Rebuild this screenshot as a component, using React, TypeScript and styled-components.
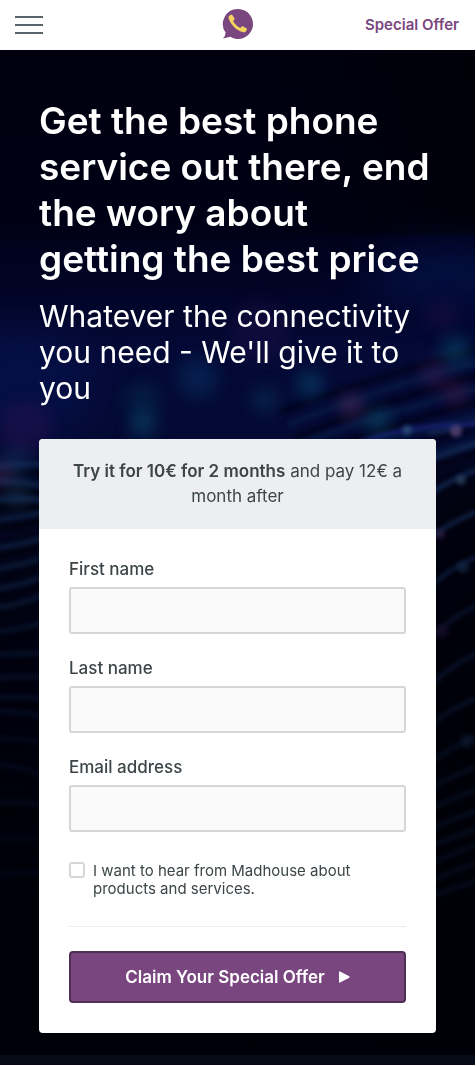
import React from "react";
import styled, { createGlobalStyle } from "styled-components";

const GlobalStyle = createGlobalStyle`
  *, *::before, *::after { box-sizing: border-box; }
  html { background: #fff; }
  body {
    margin: 0;
    padding: 0 1px 1px 0;
    background: #fff;
    color: #3d4548;
    font-family: Inter, "Open Sans", "Liberation Sans", sans-serif;
  }
`;

const Header = styled.header`
  display: grid;
  grid-template-columns: 1fr auto 1fr;
  align-items: center;
  height: 50px;
  padding: 0 16px 0 15px;
  background: #fff;
`;

const MenuButton = styled.button`
  display: flex;
  flex-direction: column;
  gap: 6px;
  justify-self: start;
  width: 28px;
  padding: 0;
  border: 0;
  background: none;
  cursor: pointer;
`;

const MenuBar = styled.span`
  height: 2px;
  background: #57646b;
`;

const LogoLink = styled.a`
  display: flex;
`;

const OfferLink = styled.a`
  justify-self: end;
  color: #7a4680;
  font-size: 15px;
  font-weight: 600;
  line-height: 20px;
  text-decoration: none;
`;

const Hero = styled.main`
  position: relative;
  overflow: hidden;
  padding: 48px 39px 22px;
  background: #000010;
`;

const Backdrop = styled.svg`
  position: absolute;
  inset: 0;
  width: 100%;
  height: 100%;
`;

const Content = styled.div`
  position: relative;
`;

const Title = styled.h1`
  margin: 0 0 16px;
  color: #fff;
  font-size: 37px;
  font-weight: 600;
  line-height: 46px;
`;

const Subtitle = styled.p`
  margin: 0 0 33px;
  color: #fff;
  font-size: 30px;
  font-weight: 400;
  line-height: 36px;
`;

const Card = styled.form`
  overflow: hidden;
  border-radius: 4px;
  background: #fff;
`;

const Banner = styled.p`
  margin: 0;
  padding: 20px 30px;
  background: #eceef0;
  font-size: 17px;
  line-height: 25px;
  text-align: center;
`;

const Strong = styled.strong`
  font-weight: 600;
`;

const Fields = styled.div`
  display: flex;
  flex-direction: column;
  gap: 24px;
  padding: 30px;
`;

const Field = styled.div`
  display: flex;
  flex-direction: column;
  gap: 8px;
`;

const Label = styled.label`
  font-size: 17px;
  font-weight: 500;
  line-height: 20px;
`;

const Input = styled.input`
  width: 100%;
  height: 47px;
  padding: 0 12px;
  border: 2px solid #d4d6d8;
  border-radius: 3px;
  background: #fafafa;
  color: inherit;
  font: inherit;
`;

const Consent = styled.div`
  display: flex;
  align-items: flex-start;
  gap: 8px;
  padding: 6px 0 4px;
`;

const Checkbox = styled.input`
  flex: none;
  appearance: none;
  width: 16px;
  height: 16px;
  margin: 0;
  border: 2px solid #d4d6d8;
  border-radius: 3px;
  background: #fff;

  &:checked { background: #7a4680; }
`;

const ConsentLabel = styled.label`
  max-width: 264px;
  font-size: 15px;
  line-height: 18px;
`;

const Divider = styled.hr`
  width: 100%;
  height: 1px;
  margin: 0;
  border: 0;
  background: #ececee;
`;

const SubmitButton = styled.button`
  display: flex;
  align-items: center;
  justify-content: center;
  gap: 14px;
  height: 52px;
  border: 2px solid #502f57;
  border-radius: 4px;
  background: #7a4680;
  color: #fff;
  font-family: inherit;
  font-size: 17px;
  font-weight: 600;
  cursor: pointer;
`;

const Footer = styled.footer`
  height: 10px;
  background: #060b18;
`;

const fields = [
  { id: "first-name", label: "First name", type: "text" },
  { id: "last-name", label: "Last name", type: "text" },
  { id: "email", label: "Email address", type: "email" },
];

const rightStreaks = [
  [430, 425, 0.8], [457, 447, 0.8], [491, 473, 0.8],
  [535, 515, 0.7], [584, 560, 0.55], [637, 609, 0.4], [684, 657, 0.4],
  [723, 701, 0.35], [760, 740, 0.3], [786, 770, 0.3], [806, 793, 0.3],
  [826, 814, 0.3], [843, 832, 0.3], [861, 848, 0.25], [878, 866, 0.25],
  [893, 884, 0.25],
];

const leftStreaks = [
  [466, 464, 0.7], [482, 488, 0.7], [500, 500, 0.7], [520, 511, 0.6],
  [548, 536, 0.6], [569, 555, 0.5], [589, 574, 0.5], [608, 592, 0.45],
  [632, 620, 0.35], [655, 653, 0.35], [678, 677, 0.3], [698, 699, 0.3],
  [712, 718, 0.25], [739, 745, 0.2], [765, 780, 0.2], [803, 805, 0.2],
  [838, 838, 0.15], [874, 872, 0.15],
];

const waveStreaks = [300, 313, 326, 339, 352, 365, 378, 391, 404];

const glows = [
  { x: 455, y: 301, r: 15, c: "#0c5273", o: 0.5 },
  { x: 310, y: 334, r: 13, c: "#0c4f78", o: 0.55 },
  { x: 198, y: 328, r: 20, c: "#0c3c70", o: 0.4 },
  { x: 142, y: 350, r: 18, c: "#0a4462", o: 0.3 },
  { x: 143, y: 374, r: 13, c: "#0d5575", o: 0.5 },
  { x: 378, y: 371, r: 13, c: "#0f6074", o: 0.45 },
  { x: 265, y: 350, r: 14, c: "#0c4668", o: 0.35 },
  { x: 351, y: 356, r: 11, c: "#54305f", o: 0.65 },
  { x: 455, y: 343, r: 12, c: "#552048", o: 0.45 },
  { x: 434, y: 324, r: 13, c: "#421f55", o: 0.5 },
  { x: 442, y: 265, r: 16, c: "#24104a", o: 0.4 },
  { x: 260, y: 280, r: 30, c: "#27104c", o: 0.35 },
  { x: 25, y: 378, r: 26, c: "#2d1252", o: 0.45 },
  { x: 15, y: 413, r: 16, c: "#113463", o: 0.5 },
  { x: 2, y: 425, r: 11, c: "#4b2b5a", o: 0.6 },
  { x: 18, y: 445, r: 13, c: "#17334e", o: 0.6 },
  { x: 407, y: 380, r: 5, c: "#2a5276", o: 0.8 },
  { x: 456, y: 381, r: 6, c: "#5a4779", o: 0.8 },
  { x: 461, y: 430, r: 5, c: "#35546c", o: 0.6 },
  { x: 440, y: 484, r: 5, c: "#39254f", o: 0.6 },
  { x: 463, y: 517, r: 6, c: "#142846", o: 0.7 },
  { x: 467, y: 691, r: 7, c: "#0a1d34", o: 0.6 },
  { x: 442, y: 581, r: 7, c: "#1c1030", o: 0.6 },
];

const NightSky = () => (
  <Backdrop viewBox="0 0 475 1005" preserveAspectRatio="none" aria-hidden="true">
    <defs>
      <linearGradient id="sky" x1="0" y1="0" x2="0" y2="1">
        <stop offset="0" stopColor="#00000f" />
        <stop offset="0.17" stopColor="#000015" />
        <stop offset="0.24" stopColor="#020427" />
        <stop offset="0.3" stopColor="#040a36" />
        <stop offset="0.38" stopColor="#040a34" />
        <stop offset="0.45" stopColor="#030720" />
        <stop offset="0.58" stopColor="#010211" />
        <stop offset="0.75" stopColor="#00000a" />
        <stop offset="1" stopColor="#000009" />
      </linearGradient>
      <linearGradient id="edge" x1="0" y1="0" x2="1" y2="0">
        <stop offset="0.55" stopColor="#000008" stopOpacity="0" />
        <stop offset="1" stopColor="#000008" stopOpacity="0.9" />
      </linearGradient>
      <filter id="haze" x="-150%" y="-150%" width="400%" height="400%" colorInterpolationFilters="sRGB">
        <feGaussianBlur stdDeviation="8" />
      </filter>
      <filter id="mist" x="-100%" y="-100%" width="300%" height="300%" colorInterpolationFilters="sRGB">
        <feGaussianBlur stdDeviation="20" />
      </filter>
      <filter id="soft" x="-50%" y="-50%" width="200%" height="200%" colorInterpolationFilters="sRGB">
        <feGaussianBlur stdDeviation="2" />
      </filter>
    </defs>
    <rect width="475" height="1005" fill="url(#sky)" />
    <rect width="475" height="185" fill="url(#edge)" />
    <rect x="420" y="420" width="110" height="640" fill="#000008" opacity="0.7" filter="url(#mist)" />
    <ellipse cx="450" cy="225" rx="85" ry="28" fill="#04134a" opacity="0.8" filter="url(#mist)" />
    <ellipse cx="20" cy="335" rx="75" ry="52" fill="#06114a" opacity="0.8" filter="url(#mist)" />
    <g filter="url(#soft)" fill="none">
      {waveStreaks.map((y, i) => (
        <path
          key={y}
          d={`M${280 + (i % 3) * 8} ${y + 62}Q370 ${y + 28} 490 ${y - 4}`}
          stroke={i % 2 ? "#0a2149" : "#00000f"}
          strokeWidth="6"
          opacity="0.55"
        />
      ))}
      {rightStreaks.map(([from, to, opacity]) => (
        <path key={from} d={`M428 ${from - 46}Q455 ${to - 46} 482 ${to - 55}`} stroke="#16305d" strokeWidth="4" opacity={opacity} />
      ))}
      {leftStreaks.map(([from, to, opacity]) => (
        <g key={from} opacity={opacity}>
          <path d={`M-8 ${from - 50}Q20 ${from - 52} 50 ${to - 50}`} stroke="#122c50" strokeWidth="5" />
          <path d={`M-8 ${from - 42}Q20 ${from - 44} 50 ${to - 42}`} stroke="#000008" strokeWidth="5" />
        </g>
      ))}
      <path d="M360 392Q420 372 485 375" stroke="#171f70" strokeWidth="4" />
    </g>
    {glows.map((g) => (
      <circle
        key={`${g.x}-${g.y}`}
        cx={g.x}
        cy={g.y}
        r={g.r}
        fill={g.c}
        opacity={g.o}
        filter={g.r > 8 ? "url(#haze)" : "url(#soft)"}
      />
    ))}
  </Backdrop>
);

const Logo = () => (
  <svg width="32" height="32" viewBox="0 0 32 32" aria-hidden="true">
    <path
      d="M17 0A15 15 0 1 1 9.200 27.800Q5 29 2 29.500Q4.600 26.800 4.600 23.600A15 15 0 0 1 17 0Z"
      fill="#7a4680"
    />
    <path
      d="M8.300 6.800L9.900 5.700Q10.700 5.300 11.300 6.100L13.500 9.200Q14 10 13.300 10.600L12.600 11.200Q12 11.800 12.500 12.700C14 15 16.100 17.100 18.500 18.600Q19.300 19 19.900 18.400L20.700 17.500Q21.300 16.900 22.100 17.400L25.400 19.300Q26.200 19.900 25.800 20.700L24.800 22.400Q24 23.600 22.200 23.300C15.500 21.600 10 16.200 7.700 9.500Q7.100 7.600 8.300 6.800Z"
      fill="#f4d35e"
    />
  </svg>
);

export default function App() {
  return (
    <>
      <GlobalStyle />
      <Header>
        <MenuButton type="button" aria-label="Open menu">
          <MenuBar />
          <MenuBar />
          <MenuBar />
        </MenuButton>
        <LogoLink href="#" aria-label="Home">
          <Logo />
        </LogoLink>
        <OfferLink href="#offer">Special Offer</OfferLink>
      </Header>
      <Hero>
        <NightSky />
        <Content>
          <Title>Get the best phone service out there, end the wory about getting the best price</Title>
          <Subtitle>Whatever the connectivity you need - We'll give it to you</Subtitle>
          <Card id="offer" onSubmit={(event) => event.preventDefault()}>
            <Banner>
              <Strong>Try it for 10€ for 2 months</Strong> and pay 12€ a month after
            </Banner>
            <Fields>
              {fields.map((field) => (
                <Field key={field.id}>
                  <Label htmlFor={field.id}>{field.label}</Label>
                  <Input id={field.id} name={field.id} type={field.type} />
                </Field>
              ))}
              <Consent>
                <Checkbox id="consent" type="checkbox" />
                <ConsentLabel htmlFor="consent">
                  I want to hear from Madhouse about products and services.
                </ConsentLabel>
              </Consent>
              <Divider />
              <SubmitButton type="submit">
                Claim Your Special Offer
                <svg width="11" height="12" viewBox="0 0 11 12" aria-hidden="true">
                  <path d="M0 1Q0 0 1 .4L10.300 5.300Q11 6 10.300 6.700L1 11.600Q0 12 0 11Z" fill="#fff" />
                </svg>
              </SubmitButton>
            </Fields>
          </Card>
        </Content>
      </Hero>
      <Footer />
    </>
  );
}
